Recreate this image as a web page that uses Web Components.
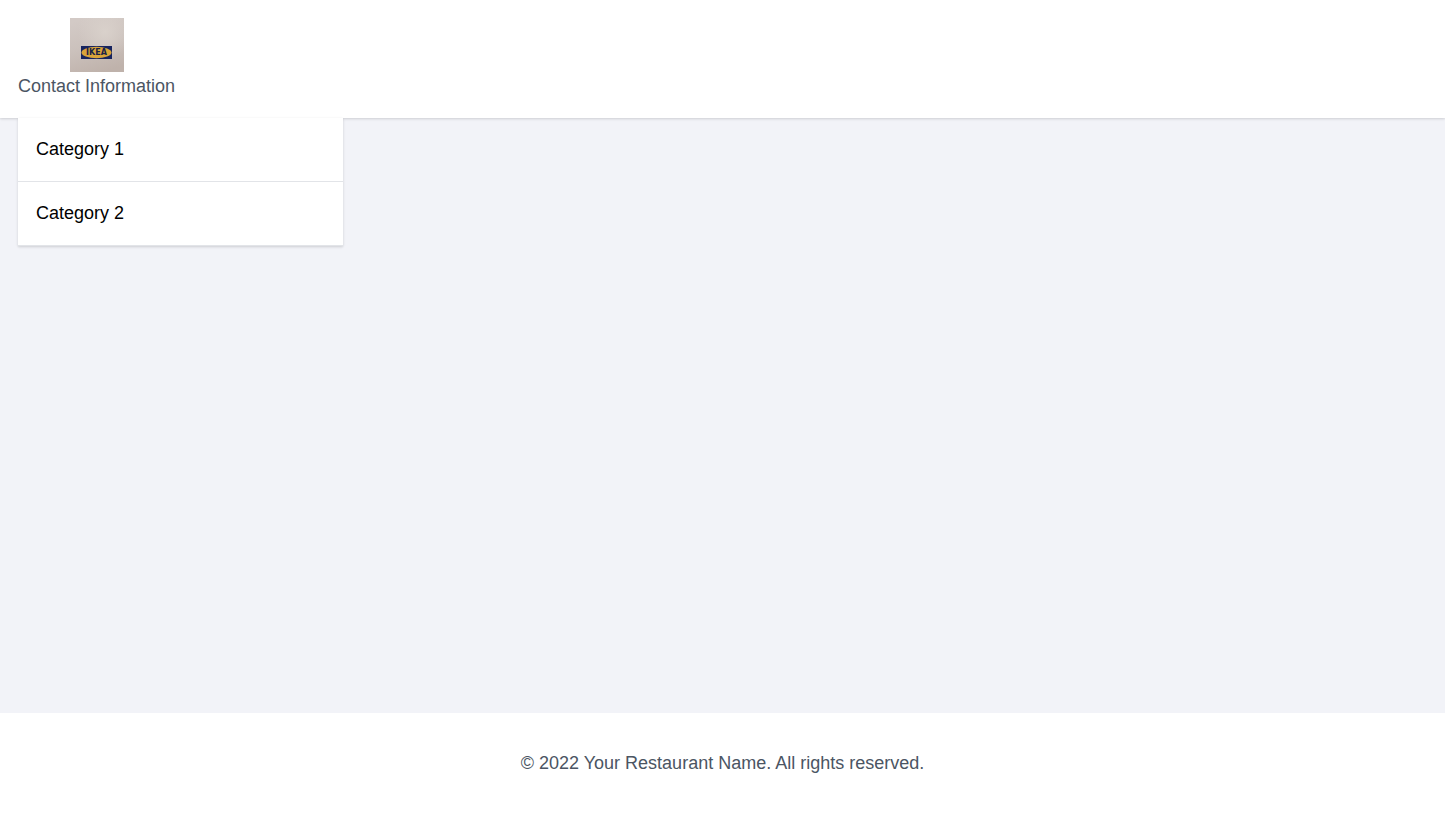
<!DOCTYPE html>
<html lang="en">
<head>
<meta charset="utf-8">
<meta name="viewport" content="width=device-width, initial-scale=1">
<title>Your Restaurant Name</title>
<style>
  body { margin: 0; font: 18px/28px "Liberation Sans", Arial, sans-serif; color: #000; }
</style>
</head>
<body>
<restaurant-page>
  <site-header slot="header">Contact Information</site-header>
  <category-list>
    <category-item>Category 1</category-item>
    <category-item>Category 2</category-item>
  </category-list>
  <site-footer slot="footer">© 2022 Your Restaurant Name. All rights reserved.</site-footer>
</restaurant-page>
<script>
const define = (name, markup) => customElements.define(name, class extends HTMLElement {
  constructor() {
    super();
    this.attachShadow({ mode: "open" }).innerHTML = markup;
  }
});

define("restaurant-page", `
  <style>
    :host { display: flex; flex-direction: column; min-height: 100vh; background: #f2f3f8; }
    main { flex: 1; width: 25%; box-sizing: border-box; padding: 0 18px; }
  </style>
  <slot name="header"></slot>
  <main><slot></slot></main>
  <slot name="footer"></slot>`);

define("brand-logo", `
  <style>
    :host { display: block; width: 54px; height: 54px; }
    svg { display: block; }
  </style>
  <svg width="54" height="54" viewBox="0 0 54 54" role="img" aria-label="IKEA">
    <defs>
      <linearGradient id="wall" x1="0.3" y1="0" x2="0.6" y2="1">
        <stop offset="0" stop-color="#d3cac6"/>
        <stop offset="0.5" stop-color="#cbc1bc"/>
        <stop offset="1" stop-color="#bfb2ab"/>
      </linearGradient>
      <radialGradient id="light" cx="0.65" cy="0.25" r="0.5">
        <stop offset="0" stop-color="#d9d1cb"/>
        <stop offset="1" stop-color="#d9d1cb" stop-opacity="0"/>
      </radialGradient>
    </defs>
    <rect width="54" height="54" fill="url(#wall)"/>
    <rect width="54" height="54" fill="url(#light)"/>
    <rect x="11" y="28" width="31" height="13" fill="#17245f"/>
    <ellipse cx="26.5" cy="34.5" rx="15" ry="5.8" fill="#d9a43a"/>
    <text x="26.5" y="37" text-anchor="middle" font-family="DejaVu Sans, sans-serif" font-weight="bold" font-size="8" fill="#1b2246">IKEA</text>
  </svg>`);

define("site-header", `
  <style>
    :host { display: block; }
    header { display: flex; padding: 18px; background: #fff; color: #4b5563;
      box-shadow: 0 1px 3px rgba(0,0,0,.1), 0 1px 2px rgba(0,0,0,.06); }
    .contact { display: flex; flex-direction: column; align-items: center; }
  </style>
  <header><div class="contact"><brand-logo></brand-logo><span><slot></slot></span></div></header>`);

define("category-list", `
  <style>
    :host { display: block; position: relative; background: #fff;
      box-shadow: 0 1px 3px rgba(0,0,0,.1), 0 1px 2px rgba(0,0,0,.06); }
  </style>
  <div role="list"><slot></slot></div>`);

define("category-item", `
  <style>
    :host { display: block; padding: 18px; line-height: 27px; border-bottom: 1px solid #e2e4e8; }
  </style>
  <slot></slot>`);

define("site-footer", `
  <style>
    :host { display: block; }
    footer { padding: 36px 18px; background: #fff; color: #4b5563; text-align: center; }
  </style>
  <footer><slot></slot></footer>`);

document.querySelectorAll("category-item").forEach(item => item.setAttribute("role", "listitem"));
</script>
</body>
</html>
